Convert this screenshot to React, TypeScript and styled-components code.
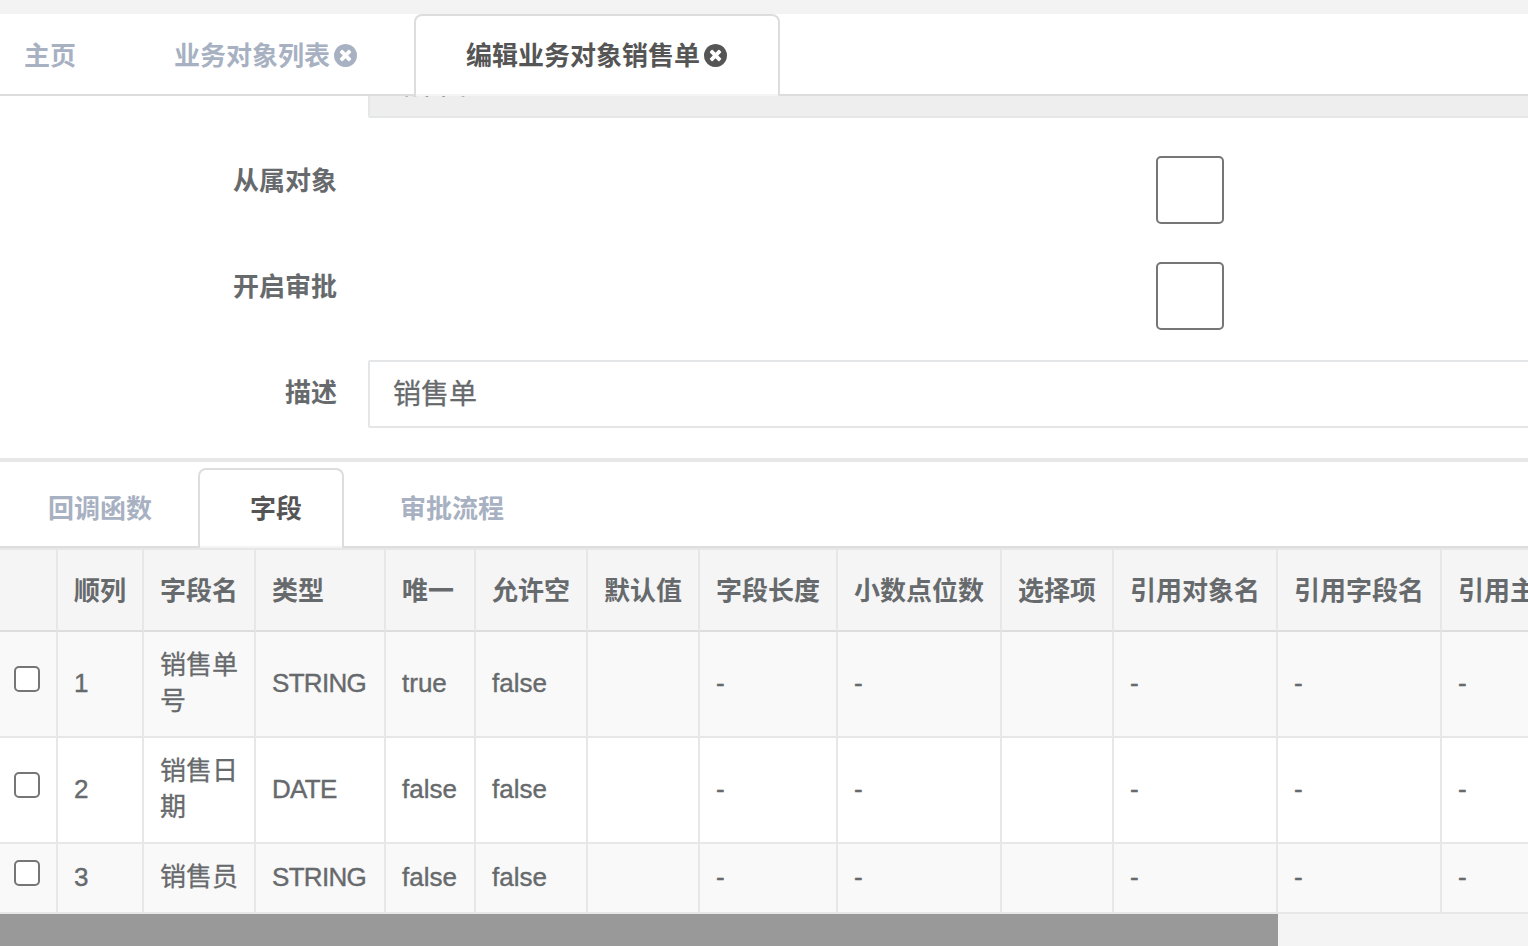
import React from 'react';
import styled, { createGlobalStyle, css } from 'styled-components';

const GlobalStyle = createGlobalStyle`
  * { box-sizing: border-box; }
  body {
    margin: 0;
    background: #fff;
    color: #676a6c;
    font: 26px/37px "Liberation Sans", "Noto Sans CJK SC", sans-serif;
    overflow: hidden;
  }
`;

const Page = styled.div`
  width: 100vw;
  height: 946px;
  overflow: hidden;
  display: flex;
  flex-direction: column;
`;

const TopStrip = styled.div`
  flex: none;
  height: 14px;
  background: #f3f3f4;
`;

const TabBar = styled.nav<{ $height: number; $indent: number }>`
  flex: none;
  display: flex;
  gap: 4px;
  height: ${(p) => p.$height}px;
  margin-left: ${(p) => p.$indent}px;
  border-bottom: 2px solid #ddd;
`;

const Tab = styled.a<{ $active?: boolean }>`
  flex: none;
  display: flex;
  align-items: center;
  height: calc(100% + 2px);
  padding: 1px 40px 0 50px;
  border: 2px solid transparent;
  border-bottom: 0;
  border-radius: 8px 8px 0 0;
  color: #a7b1c2;
  font-weight: 600;
  white-space: nowrap;
  ${(p) =>
    p.$active &&
    css`
      color: #555;
      border-color: #ddd;
      background: linear-gradient(#fff, #fff) 0 0 / 100% calc(100% - 2px) no-repeat #f4f4f4;
    `}
`;

const CloseGlyph = styled.svg`
  width: 23px;
  height: 23px;
  margin: 0 11px 3px 4px;
  fill: currentColor;
`;

const FormPanel = styled.section`
  flex: none;
  height: 366px;
  overflow: hidden;
  border-bottom: 4px solid #e7e7e7;
`;

const Form = styled.div`
  display: flex;
  flex-direction: column;
  gap: 30px;
  margin-top: -46px;
`;

const FormRow = styled.div`
  display: grid;
  grid-template-columns: 337px 1644px;
  column-gap: 31px;
`;

const Label = styled.label`
  padding-top: 15px;
  text-align: right;
  font-weight: 600;
`;

const TextInput = styled.input`
  width: 100%;
  height: 68px;
  padding: 0 23px 4px;
  border: 2px solid #e5e6e7;
  border-radius: 2px;
  background: #fff;
  color: inherit;
  font: 28px "Liberation Sans", "Noto Sans CJK SC", sans-serif;
  -webkit-text-stroke: 0.3px currentColor;
  &:disabled {
    padding-bottom: 5px;
    background: #eee;
    opacity: 1;
  }
`;

const Check = styled.input.attrs({ type: 'checkbox' })<{ $large?: boolean }>`
  appearance: none;
  display: block;
  width: ${(p) => (p.$large ? 68 : 26)}px;
  height: ${(p) => (p.$large ? 68 : 26)}px;
  margin: ${(p) => (p.$large ? '8px auto 0' : '0 0 10px')};
  border: 2px solid #767676;
  border-radius: 5px;
  background: #fff;
`;

const FieldTabs = styled.div`
  flex: none;
  padding-top: 6px;
`;

const Table = styled.table`
  flex: none;
  width: 1606px;
  table-layout: fixed;
  border-collapse: separate;
  border-spacing: 0;
  line-height: 36px;
`;

const HeadCell = styled.th`
  height: 84px;
  padding: 2px 0 0 16px;
  border: 0 solid #e7e7e7;
  border-width: 2px 2px 2px 0;
  border-bottom-color: #ddd;
  background: #f5f5f6;
  text-align: left;
  font-weight: 600;
  white-space: nowrap;
`;

const Cell = styled.td`
  padding: 0 14px 2px 16px;
  border: 0 solid #e7e7e7;
  border-width: 0 2px 2px 0;
  vertical-align: middle;
  -webkit-text-stroke: 0.3px currentColor;
  &:first-child {
    padding: 0 0 0 14px;
  }
`;

const Latin = styled.span<{ $caps?: boolean }>`
  letter-spacing: ${(p) => (p.$caps ? '-0.7px' : '0')};
  -webkit-text-stroke: 0.4px currentColor;
`;

const Row = styled.tr<{ $height: number }>`
  height: ${(p) => p.$height}px;
  &:nth-child(odd) {
    background: #f9f9f9;
  }
`;

const ScrollTrack = styled.div`
  flex: none;
  height: 32px;
  background: #f4f4f4;
`;

const ScrollThumb = styled.div`
  width: 1278px;
  height: 100%;
  background: #999;
`;

function CloseIcon() {
  return (
    <CloseGlyph viewBox="0 128 1536 1536">
      <path d="M1149 1122q0-26-19-45l-181-181 181-181q19-19 19-45 0-27-19-46l-90-90q-19-18-45-18-27 0-45 18l-181 181-181-181q-19-18-45-18-26 0-45 18l-90 90q-19 19-19 46 0 26 19 45l181 181-181 181q-19 19-19 45 0 27 19 46l90 90q19 18 45 18 27 0 45-18l181-181 181 181q18 18 45 18 26 0 45-18l90-90q19-19 19-46zm387-226q0 209-103 385.5t-279.5 279.5-385.5 103-385.5-103-279.5-279.5-103-385.5 103-385.5 279.5-279.5 385.5-103 385.5 103 279.5 279.5 103 385.5z" />
    </CloseGlyph>
  );
}

const columns: [string, number][] = [
  ['', 58],
  ['顺列', 86],
  ['字段名', 112],
  ['类型', 130],
  ['唯一', 90],
  ['允许空', 112],
  ['默认值', 112],
  ['字段长度', 138],
  ['小数点位数', 164],
  ['选择项', 112],
  ['引用对象名', 164],
  ['引用字段名', 164],
  ['引用主键名', 164],
];

const rows = [
  { height: 106, name: '销售单号', type: 'STRING', unique: 'true' },
  { height: 106, name: '销售日期', type: 'DATE', unique: 'false' },
  { height: 70, name: '销售员', type: 'STRING', unique: 'false' },
];

export default function App() {
  return (
    <Page>
      <GlobalStyle />
      <TopStrip />
      <TabBar $height={82} $indent={-28}>
        <Tab>主页</Tab>
        <Tab>
          业务对象列表
          <CloseIcon />
        </Tab>
        <Tab $active>
          编辑业务对象销售单
          <CloseIcon />
        </Tab>
      </TabBar>
      <FormPanel>
        <Form>
          <FormRow>
            <Label />
            <TextInput disabled defaultValue="销售单" />
          </FormRow>
          <FormRow>
            <Label>从属对象</Label>
            <Check $large />
          </FormRow>
          <FormRow>
            <Label>开启审批</Label>
            <Check $large />
          </FormRow>
          <FormRow>
            <Label>描述</Label>
            <TextInput defaultValue="销售单" />
          </FormRow>
        </Form>
      </FormPanel>
      <FieldTabs>
        <TabBar $height={80} $indent={-4}>
          <Tab>回调函数</Tab>
          <Tab $active>字段</Tab>
          <Tab>审批流程</Tab>
        </TabBar>
      </FieldTabs>
      <Table>
        <colgroup>
          {columns.map(([title, width]) => (
            <col key={title} width={width} />
          ))}
        </colgroup>
        <thead>
          <tr>
            {columns.map(([title]) => (
              <HeadCell key={title}>{title}</HeadCell>
            ))}
          </tr>
        </thead>
        <tbody>
          {rows.map((row, i) => (
            <Row key={row.name} $height={row.height}>
              <Cell>
                <Check />
              </Cell>
              <Cell>
                <Latin>{i + 1}</Latin>
              </Cell>
              <Cell>{row.name}</Cell>
              <Cell>
                <Latin $caps>{row.type}</Latin>
              </Cell>
              {[row.unique, 'false', '', '-', '-', '', '-', '-', '-'].map((value, j) => (
                <Cell key={j}>
                  <Latin>{value}</Latin>
                </Cell>
              ))}
            </Row>
          ))}
        </tbody>
      </Table>
      <ScrollTrack>
        <ScrollThumb />
      </ScrollTrack>
    </Page>
  );
}
